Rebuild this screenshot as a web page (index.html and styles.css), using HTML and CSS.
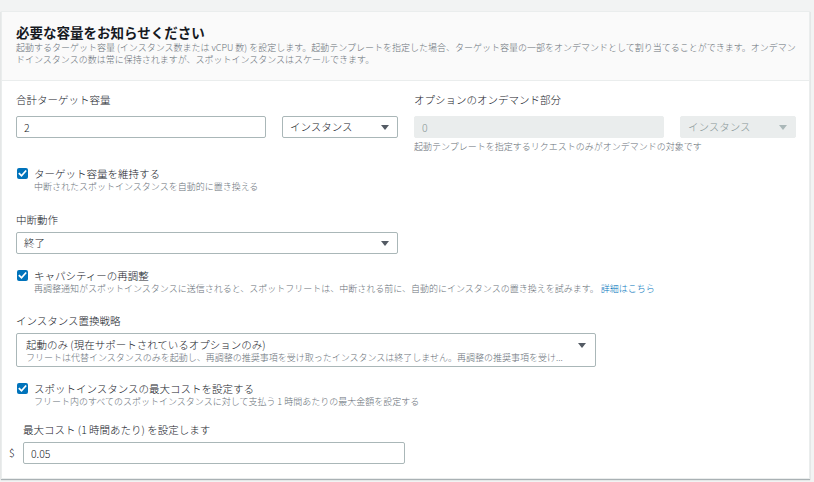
FILE: index.html
```html
<!DOCTYPE html>
<html lang="ja">
<head>
<meta charset="utf-8">
<title>必要な容量をお知らせください</title>
<link rel="stylesheet" href="styles.css">
</head>
<body>
<div class="card">
  <header class="card-header">
    <h2 class="title">必要な容量をお知らせください</h2>
    <p class="header-desc">起動するターゲット容量 (インスタンス数または vCPU 数) を設定します。起動テンプレートを指定した場合、ターゲット容量の一部をオンデマンドとして割り当てることができます。オンデマンドインスタンスの数は常に保持されますが、スポットインスタンスはスケールできます。</p>
  </header>
  <div class="card-body">
    <div class="row-capacity">
      <div class="field">
        <div class="label label-top">合計ターゲット容量</div>
        <div class="input-pair">
          <input class="text-input" type="text" value="2">
          <div class="select select-unit"><span>インスタンス</span><svg class="caret" width="8" height="5" viewBox="0 0 8 5"><path d="M0 0h8L4 5z"/></svg></div>
        </div>
      </div>
      <div class="field">
        <div class="label label-top">オプションのオンデマンド部分</div>
        <div class="input-pair">
          <input class="text-input disabled" type="text" value="0" disabled>
          <div class="select select-unit disabled"><span>インスタンス</span><svg class="caret" width="8" height="5" viewBox="0 0 8 5"><path d="M0 0h8L4 5z"/></svg></div>
        </div>
        <div class="help">起動テンプレートを指定するリクエストのみがオンデマンドの対象です</div>
      </div>
    </div>

    <div class="check-row cb-maintain">
      <svg class="checkbox" width="11" height="11" viewBox="0 0 11 11"><rect width="11" height="11" rx="2"/><polyline points="2.4,5.7 4.5,7.8 8.6,3.1"/></svg>
      <div class="check-text">
        <div class="check-label">ターゲット容量を維持する</div>
        <div class="desc">中断されたスポットインスタンスを自動的に置き換える</div>
      </div>
    </div>

    <div class="section sec-interrupt">
      <div class="label">中断動作</div>
      <div class="select select-wide"><span>終了</span><svg class="caret" width="8" height="5" viewBox="0 0 8 5"><path d="M0 0h8L4 5z"/></svg></div>
    </div>

    <div class="check-row cb-rebalance">
      <svg class="checkbox" width="11" height="11" viewBox="0 0 11 11"><rect width="11" height="11" rx="2"/><polyline points="2.4,5.7 4.5,7.8 8.6,3.1"/></svg>
      <div class="check-text">
        <div class="check-label">キャパシティーの再調整</div>
        <div class="desc">再調整通知がスポットインスタンスに送信されると、スポットフリートは、中断される前に、自動的にインスタンスの置き換えを試みます。 <a class="link" href="#">詳細はこちら</a></div>
      </div>
    </div>

    <div class="section sec-strategy">
      <div class="label">インスタンス置換戦略</div>
      <div class="select select-multi">
        <div class="select-texts">
          <div class="select-main">起動のみ (現在サポートされているオプションのみ)</div>
          <div class="select-sub">フリートは代替インスタンスのみを起動し、再調整の推奨事項を受け取ったインスタンスは終了しません。再調整の推奨事項を受け...</div>
        </div>
        <svg class="caret caret-top" width="8" height="5" viewBox="0 0 8 5"><path d="M0 0h8L4 5z"/></svg>
      </div>
    </div>

    <div class="check-row cb-maxcost">
      <svg class="checkbox" width="11" height="11" viewBox="0 0 11 11"><rect width="11" height="11" rx="2"/><polyline points="2.4,5.7 4.5,7.8 8.6,3.1"/></svg>
      <div class="check-text">
        <div class="check-label">スポットインスタンスの最大コストを設定する</div>
        <div class="desc">フリート内のすべてのスポットインスタンスに対して支払う 1 時間あたりの最大金額を設定する</div>
      </div>
    </div>

    <div class="cost-grid">
      <div class="label cost-label">最大コスト (1 時間あたり) を設定します</div>
      <div class="currency">$</div>
      <input class="text-input cost-input" type="text" value="0.05">
    </div>
  </div>
</div>
</body>
</html>
```

FILE: styles.css
```css
* {
  box-sizing: border-box;
}

html, body {
  margin: 0;
  padding: 0;
}

body {
  background: #f2f3f3;
  font-family: "Noto Sans CJK JP", "Noto Sans", sans-serif;
  font-weight: 300;
  color: #16191f;
  height: 482px;
  overflow: hidden;
}

.card {
  margin: 11px 4px 0 1px;
  background: #ffffff;
  border: 1px solid #eaeded;
  box-shadow: 0 1px 1px 0 rgba(0, 28, 36, 0.3);
}

.card-header {
  background: #fafafa;
  border-bottom: 1px solid #eaeded;
  padding: 13px 13px 14px 14px;
}

.title {
  margin: 0;
  font-size: 13.5px;
  line-height: 15px;
  font-weight: 700;
  color: #16191f;
}

.header-desc {
  margin: 2px 0 0;
  font-size: 9px;
  line-height: 12px;
  color: #687078;
}

.card-body {
  padding: 12px 13px 14px 14px;
}

.label {
  font-size: 10.5px;
  line-height: 14px;
  margin-bottom: 5px;
}

.label-top {
  margin-bottom: 9px;
}

.row-capacity {
  display: grid;
  grid-template-columns: 1fr 1fr;
  column-gap: 16px;
}

.input-pair {
  display: flex;
  gap: 16px;
}

.text-input {
  height: 22px;
  border: 1px solid #aab7b8;
  border-radius: 2px;
  padding: 0 7px;
  font-family: inherit;
  font-weight: 300;
  font-size: 10.5px;
  color: #16191f;
  background: #ffffff;
  outline: none;
  margin: 0;
}

.input-pair .text-input {
  flex: 1;
  min-width: 0;
}

.text-input.disabled {
  background: #eaeded;
  border-color: #eaeded;
  color: #879596;
}

.select {
  display: flex;
  align-items: center;
  justify-content: space-between;
  height: 22px;
  border: 1px solid #aab7b8;
  border-radius: 2px;
  padding: 0 8px 0 7px;
  font-size: 10.5px;
  line-height: 14px;
  background: #ffffff;
}

.select-unit {
  width: 116px;
  flex: none;
}

.select.disabled {
  background: #eaeded;
  border-color: #eaeded;
  color: #879596;
}

.caret {
  flex: none;
  fill: #545b64;
}

.select.disabled .caret {
  fill: #aab7b8;
}

.help {
  margin-top: 3px;
  font-size: 9px;
  line-height: 12px;
  color: #687078;
}

.check-row {
  display: flex;
  align-items: flex-start;
  gap: 6px;
}

.checkbox {
  flex: none;
  margin: 1px 0 0 1px;
}

.checkbox rect {
  fill: #0073bb;
}

.checkbox polyline {
  fill: none;
  stroke: #ffffff;
  stroke-width: 1.7;
  stroke-linecap: square;
}

.check-label {
  font-size: 10.5px;
  line-height: 14px;
}

.desc {
  font-size: 9px;
  line-height: 12px;
  color: #687078;
}

.link {
  color: #0073bb;
  text-decoration: none;
}

.cb-maintain {
  margin-top: 14px;
}

.sec-interrupt {
  margin-top: 20px;
}

.select-wide {
  width: 382px;
}

.cb-rebalance {
  margin-top: 15px;
}

.sec-strategy {
  margin-top: 19px;
}

.select-multi {
  width: 580px;
  height: 34px;
  align-items: flex-start;
  padding: 5px 9px 2px 9px;
}

.select-texts {
  flex: 1;
  min-width: 0;
  padding-right: 12px;
}

.select-main {
  line-height: 12px;
  font-size: 10.5px;
}

.select-sub {
  margin-top: 1px;
  font-size: 9px;
  line-height: 12px;
  color: #687078;
  white-space: nowrap;
  overflow: hidden;
}

.caret-top {
  margin-top: 4px;
}

.cb-maxcost {
  margin-top: 15px;
}

.cost-grid {
  margin-top: 15px;
  margin-left: -7px;
  display: grid;
  grid-template-columns: 14px 382px;
  align-items: center;
}

.cost-label {
  grid-column: 2;
  grid-row: 1;
}

.currency {
  grid-column: 1;
  grid-row: 2;
  font-size: 10.5px;
  line-height: 14px;
  color: #16191f;
}

.cost-input {
  grid-column: 2;
  grid-row: 2;
  width: 382px;
}
```
